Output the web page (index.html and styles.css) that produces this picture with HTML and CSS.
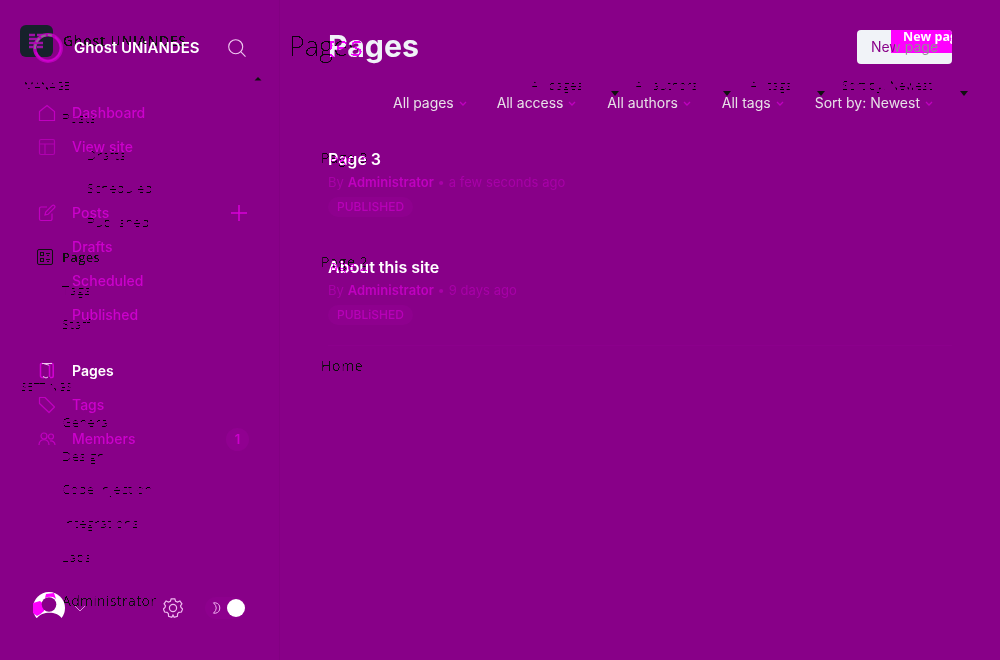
FILE: index.html
```html
<!DOCTYPE html>
<html lang="en">
<head>
<meta charset="utf-8">
<title>Pages</title>
<link rel="stylesheet" href="styles.css">
</head>
<body>
<svg class="defs" width="0" height="0" aria-hidden="true">
  <filter id="thin" x="-5%" y="-20%" width="110%" height="140%"><feConvolveMatrix order="3 1" kernelMatrix="1 2 1" divisor="4" preserveAlpha="false"/><feComponentTransfer><feFuncR type="linear" slope="0"/><feFuncG type="linear" slope="0"/><feFuncB type="linear" slope="0"/><feFuncA type="linear" slope="9" intercept="-4.6"/></feComponentTransfer></filter>
  <filter id="crisp" x="-5%" y="-20%" width="110%" height="140%"><feComponentTransfer><feFuncA type="linear" slope="8" intercept="-4.2"/></feComponentTransfer></filter>
</svg>

<div class="under">
  <div class="u-side">
    <div class="u-brand">
      <svg width="33" height="32" viewBox="0 0 33 32"><rect width="33" height="32" rx="6" fill="#16212b"/><path d="M9 10h6M17 10h7M9 14h10M9 18h14M9 22h6M17 22h6" stroke="#a010a8" stroke-width="2.4"/></svg>
      <span class="crisp">Ghost UNIANDES</span>
    </div>
    <div class="u-head u-manage"><span class="thin">MANAGE</span><svg width="8" height="5" viewBox="0 0 8 5"><path d="M.5 4.5h7L4 1z" fill="#101010"/></svg></div>
    <div class="u-row thin">Posts</div>
    <div class="u-row u-sub u-first thin">Drafts</div>
    <div class="u-row u-sub thin">Scheduled</div>
    <div class="u-row u-sub thin">Published</div>
    <div class="u-row u-active">
      <svg width="17" height="17" viewBox="0 0 17 17" fill="none" stroke="#101010"><rect x=".5" y=".5" width="15" height="15" rx="1.5"/><rect x="3.5" y="3.5" width="3" height="3"/><rect x="3.5" y="9.5" width="3" height="3"/><path d="M9 4.5h4M10 6.500h2M9 10.500h4M10 12.500h2"/></svg>
      <span class="crisp">Pages</span></div>
    <div class="u-row thin">Tags</div>
    <div class="u-row thin">Staff</div>
    <div class="u-head u-settings thin">SETTINGS</div>
    <div class="u-row thin">General</div>
    <div class="u-row thin">Design</div>
    <div class="u-row thin">Code injection</div>
    <div class="u-row thin">Integrations</div>
    <div class="u-row thin">Labs</div>
    <div class="u-row u-user crisp">Administrator</div>
  </div>
  <div class="u-main">
    <div class="u-title crisp">Pages</div>
    <div class="u-filters">
      <span class="f1"><b class="thin">All pages</b><i></i></span>
      <span class="f2"><b class="thin">All authors</b><i></i></span>
      <span class="f3"><b class="thin">All tags</b><i></i></span>
      <span class="f4"><b class="thin">Sort by: Newest</b><i></i></span>
    </div>
    <div class="u-item crisp">Page 3</div>
    <div class="u-item crisp">Page 2</div>
    <div class="u-item crisp">Home</div>
  </div>
</div>

<div class="app">
  <aside class="side">
    <header class="brand">
      <svg class="ring" width="32" height="32" viewBox="0 0 32 32" fill="none"><circle cx="16" cy="16" r="13.200" stroke="#b800b8" stroke-width="3.500"/><path d="M3 17A13.200 13.200 0 0 1 20 3.500" stroke="#8a6a90" stroke-width="2" stroke-dasharray="5 2"/><path d="M23 5A13.200 13.200 0 0 1 16 29A13 13 0 0 1 4 20" stroke="#d000d0" stroke-width="1.600"/></svg>
      <span class="name">Ghost UNiANDES</span>
      <svg class="search" width="20" height="20" viewBox="0 0 20 20" fill="none" stroke="#f0c8f0" stroke-width="1.100"><circle cx="8.700" cy="8.700" r="7"/><path d="M13.700 13.700 18.500 18.700"/></svg>
    </header>
    <nav class="nav">
      <section>
        <a><svg viewBox="0 0 18 18"><path d="M1.500 7.500 9 1.500l7.500 6v9h-15z"/></svg>Dashboard</a>
        <a class="dim"><svg viewBox="0 0 18 18"><rect x="1.500" y="1.500" width="15" height="15" rx="1.500"/><path d="M1.500 6h15M7 6v10.500"/></svg>View site</a>
      </section>
      <section>
        <a><svg viewBox="0 0 18 18"><path d="M9 3H3a1.500 1.500 0 0 0-1.500 1.500V15A1.500 1.500 0 0 0 3 16.500h9.500A1.500 1.500 0 0 0 14 15V9.500M7 11l.7-3 6.500-6.400a1.500 1.500 0 0 1 2.200 2.200L10 10.300z"/></svg>Posts
          <svg class="plus" viewBox="0 0 16 16"><path d="M0 8h16M8 0v16"/></svg></a>
        <a class="sub">Drafts</a>
        <a class="sub">Scheduled</a>
        <a class="sub">Published</a>
      </section>
      <section>
        <a class="active"><svg viewBox="0 0 18 18"><path d="M5 1.500H3.500a1 1 0 0 0-1 1V14a1.500 1.500 0 0 0 1.500 1.500h2M12 15.500h2a1.200 1.200 0 0 0 1.200-1.200V3a1.500 1.500 0 0 0-1.500-1.500H12M11.500 3v12" stroke-width="1.500" stroke="#d400d4"/><path d="M4 1.500h10M6 1.700l5 1.500M5 14.500l3 1.500 2-1" stroke="#f0c8f0" stroke-width="1"/></svg>Pages</a>
        <a><svg viewBox="0 0 18 18"><path d="M1.500 1.500H7L16.500 11 11 16.500 1.500 7.500z" stroke-linejoin="round"/></svg>Tags</a>
        <a><svg viewBox="0 0 18 18"><circle cx="6" cy="6" r="3"/><circle cx="13" cy="6.500" r="2.500"/><path d="M1 15c0-7 10-7 10 0M12 11c2.500-.5 5 1 5 4"/></svg>Members<span class="count">1</span></a>
      </section>
    </nav>
    <footer class="foot">
      <svg width="32" height="32" viewBox="0 0 32 32"><defs><clipPath id="c"><path d="M0 0H32V26H28.500C24 19 9 19 4 26H0z"/></clipPath></defs><g clip-path="url(#c)"><circle cx="16" cy="16" r="16" fill="#fff"/><path d="M0 11L7 9Q12 12 11 19Q7 23 4 24L0 21zM13 2L21 1 23 7 20 5Q16 4 12 6z" fill="#f0f"/><circle cx="16" cy="12.500" r="7.300" fill="#808"/></g></svg>
      <svg class="down" width="12" height="7" viewBox="0 0 12 7" fill="none" stroke="#e090e0"><path d="M1 1l5 5 5-5"/></svg>
      <svg class="gear" width="20" height="20" viewBox="0 0 20 20" fill="none" stroke="#f0b8f0" stroke-width="1.200"><circle cx="10" cy="10" r="3.600"/><path d="M8.200.8h3.600l.8 2.400 2 .8 2.300-1 2 2.800-1.400 2 .5 1.700 1.600 1.500-1.200 3-2.500.3-1.300 1.400-.2 2.500-3.200 1-1.200-2.200-1.200 2.200-3.200-1-.2-2.500-1.300-1.400-2.500-.3-1.200-3 1.600-1.500.5-1.700-1.400-2 2-2.800 2.300 1 2-.8z"/></svg>
      <span class="toggle"><svg width="9" height="12" viewBox="0 0 9 12" fill="none" stroke="#f0b0f0"><path d="M1.500 .8H3.500A5.300 5.300 0 0 1 3.500 11.200H1.500Q7 6 1.500 .8z"/></svg><i></i></span>
    </footer>
  </aside>
  <main class="main">
    <div class="top"><h1 data-echo="Pages">Pages</h1><button><span class="corner">New page</span><span class="label">New page</span></button></div>
    <div class="filters">
      <span>All pages<svg viewBox="0 0 8 5"><path d="M1 1l3 3 3-3"/></svg></span>
      <span>All access<svg viewBox="0 0 8 5"><path d="M1 1l3 3 3-3"/></svg></span>
      <span>All authors<svg viewBox="0 0 8 5"><path d="M1 1l3 3 3-3"/></svg></span>
      <span>All tags<svg viewBox="0 0 8 5"><path d="M1 1l3 3 3-3"/></svg></span>
      <span>Sort by: Newest<svg viewBox="0 0 8 5"><path d="M1 1l3 3 3-3"/></svg></span>
    </div>
    <article><h2 data-echo="Page 3">Page 3</h2><p>By <b>Administrator</b> • a few seconds ago</p><em>PUBLISHED</em></article>
    <article><h2 data-echo="Page 2">About this site</h2><p>By <b>Administrator</b> • 9 days ago</p><em>PUBLiSHED</em></article>
  </main>
</div>
</body>
</html>
```
FILE: styles.css
```css
* { box-sizing: border-box; }
body { margin: 0; width: 1000px; height: 660px; overflow: hidden; position: relative; background: #880088; font-family: Inter, sans-serif; }
svg { display: block; flex: none; }
.defs { position: absolute; }

/* faint layer behind the app */
.under { position: absolute; inset: 0; display: flex; color: #101010; font-family: "Open Sans", sans-serif; font-size: 13px; }
.thin { filter: url(#thin); }
.crisp { filter: url(#crisp); }
.u-side { width: 280px; padding: 25px 18px 0 20px; }
.u-brand { display: flex; height: 32px; gap: 10px; font-size: 14px; font-weight: 600; line-height: 32px; }
.u-brand span { letter-spacing: .6px; }
.u-head { font-size: 11px; height: 20px; line-height: 20px; }
.u-manage { margin: 19px 0 6px; padding-left: 4px; display: flex; justify-content: space-between; }
.u-settings { margin: 35px 0 9px; padding-left: 1px; letter-spacing: .2px; }
.u-row { height: 33.700px; line-height: 33.700px; padding-left: 42px; letter-spacing: .3px; }
.u-sub { padding-left: 67px; }
.u-first { margin-top: 3px; }
.u-active { display: flex; align-items: center; gap: 8px; padding-left: 17px; margin-top: 1px; font-weight: 600; }
.u-user { margin-top: 10px; font-size: 14px; }
.u-main { flex: 1; padding: 26px 0 0 9px; }
.u-title { font-size: 27px; height: 40px; line-height: 40px; font-weight: 300; }
.u-filters { display: flex; height: 20px; margin: 10px 0 0 242px; font-size: 12px; line-height: 20px; }
.u-filters b { font-weight: 400; }
.u-filters span { display: flex; justify-content: space-between; flex: none; letter-spacing: .2px; }
.u-filters i { border: 4px solid transparent; border-top: 5px solid #101010; border-bottom: 0; margin-top: 15px; height: 5px; }
.f1 { width: 88px; margin-right: 16px; }
.f2 { width: 96px; margin-right: 19px; }
.f3 { width: 75px; margin-right: 17px; }
.f4 { width: 126px; }
.u-item { height: 104px; padding: 52px 0 0 32px; line-height: 20px; font-size: 14px; letter-spacing: .7px; }

/* app */
.app { position: relative; display: flex; height: 660px; }
.side { width: 280px; border-right: 1px solid #820082; padding: 32px 32px 36px; display: flex; flex-direction: column; }
.brand { display: flex; align-items: center; height: 32px; color: #fff; }
.name { font-size: 15px; font-weight: 600; margin-left: 10px; flex: 1; white-space: nowrap; line-height: 32px; height: 32px; letter-spacing: .03px; }
.nav { padding-top: 32px; display: flex; flex-direction: column; }
.nav section { margin-bottom: 32px; }
.nav section:nth-child(2) { margin-bottom: 22px; }
.nav a { display: flex; align-items: center; height: 34px; line-height: 32px; padding: 0 0 0 6px; color: #cc00cc; font-size: 14px; letter-spacing: .03px; font-weight: 500; }
.nav a > svg { width: 18px; height: 18px; margin-right: 16px; fill: none; stroke: #c000c0; stroke-width: 1.200; }
.nav .dim > svg { stroke: #b000b0; }
.nav a.sub { padding-left: 40px; }
.nav a .plus { width: 16px; height: 16px; margin: 0 0 0 auto; stroke: #d800d8; stroke-width: 1.500; }
.nav a.active { color: #fff; font-weight: 600; }
.count { margin-left: auto; margin-right: -2px; width: 23px; height: 23px; line-height: 23px; border-radius: 12px; background: #900090; text-align: center; font-size: 13px; font-weight: 600; }
.foot { margin-top: auto; display: flex; align-items: center; height: 32px; }
.down { margin-left: 9px; }
.gear { margin-left: 77px; }
.toggle { margin-left: 22px; width: 41px; height: 22px; border-radius: 11px; background: #8d008d; display: flex; align-items: center; justify-content: space-between; padding: 0 1px 0 7px; }
.toggle i { width: 18px; height: 18px; border-radius: 50%; background: #fff; }
.side .ring { margin-left: 0; }
.foot > svg:first-child { margin-left: 1px; }
.main { flex: 1; padding: 30px 48px 0; }
.top { display: flex; justify-content: space-between; height: 34px; }
h1 { margin: 0; color: #f0f2f8; font-size: 30.300px; line-height: 33px; font-weight: 700; position: relative; }
h1::after, h2::after { content: attr(data-echo); position: absolute; color: #f0f; mix-blend-mode: multiply; font-family: "Open Sans"; font-weight: 400; white-space: nowrap; filter: url(#crisp); }
h1::after { left: -39px; top: -4px; font-size: 27px; line-height: 40px; font-weight: 400; }
button { position: relative; width: 95px; height: 34px; border: 0; border-radius: 4px; background: #f1f3f8; padding: 0; overflow: hidden; font: 14px/34px Inter; color: #880088; }
.corner { position: absolute; left: 34px; top: 0; width: 61px; height: 23px; padding-left: 12px; background: #f0f; color: #fff; font: 700 12.500px/14px "Open Sans"; white-space: nowrap; overflow: hidden; text-align: left; }
.label { position: relative; color: transparent; background: linear-gradient(90deg, #808 36%, #909090 36%); background-clip: text; -webkit-background-clip: text; }
.filters { display: flex; justify-content: flex-end; gap: 31px; height: 20px; margin: 29px 19px 0 0; color: #e8e0e8; font-size: 14px; line-height: 20px; white-space: nowrap; }
.filters span { display: flex; align-items: center; gap: 5px; }
.filters span:nth-child(-n+2) { letter-spacing: -.05px; }
.filters svg { width: 8px; height: 5px; fill: none; stroke: #c000c0; stroke-width: 1.300; }
.filters span:first-child { margin-right: -1px; }
article { height: 108px; padding-top: 36px; }
article + article { height: 125px; border-bottom: 1px solid #8c008c; }
h2 { position: relative; margin: 0; font-size: 16px; line-height: 21px; font-weight: 600; color: #fff; }
h2::after { left: -7px; top: -1px; font-size: 14px; line-height: 20px; letter-spacing: .7px; }
p { margin: 3px 0 5px; font-size: 13px; line-height: 19px; letter-spacing: .05px; color: #a800a8; }
p b { font-weight: 600; color: #c000c0; }
em { display: inline-block; height: 20px; line-height: 20px; padding: 0 9px; border-radius: 10px; background: #8e008e; color: #b800b8; font-style: normal; font-size: 12px; font-weight: 500; vertical-align: top; }
```
